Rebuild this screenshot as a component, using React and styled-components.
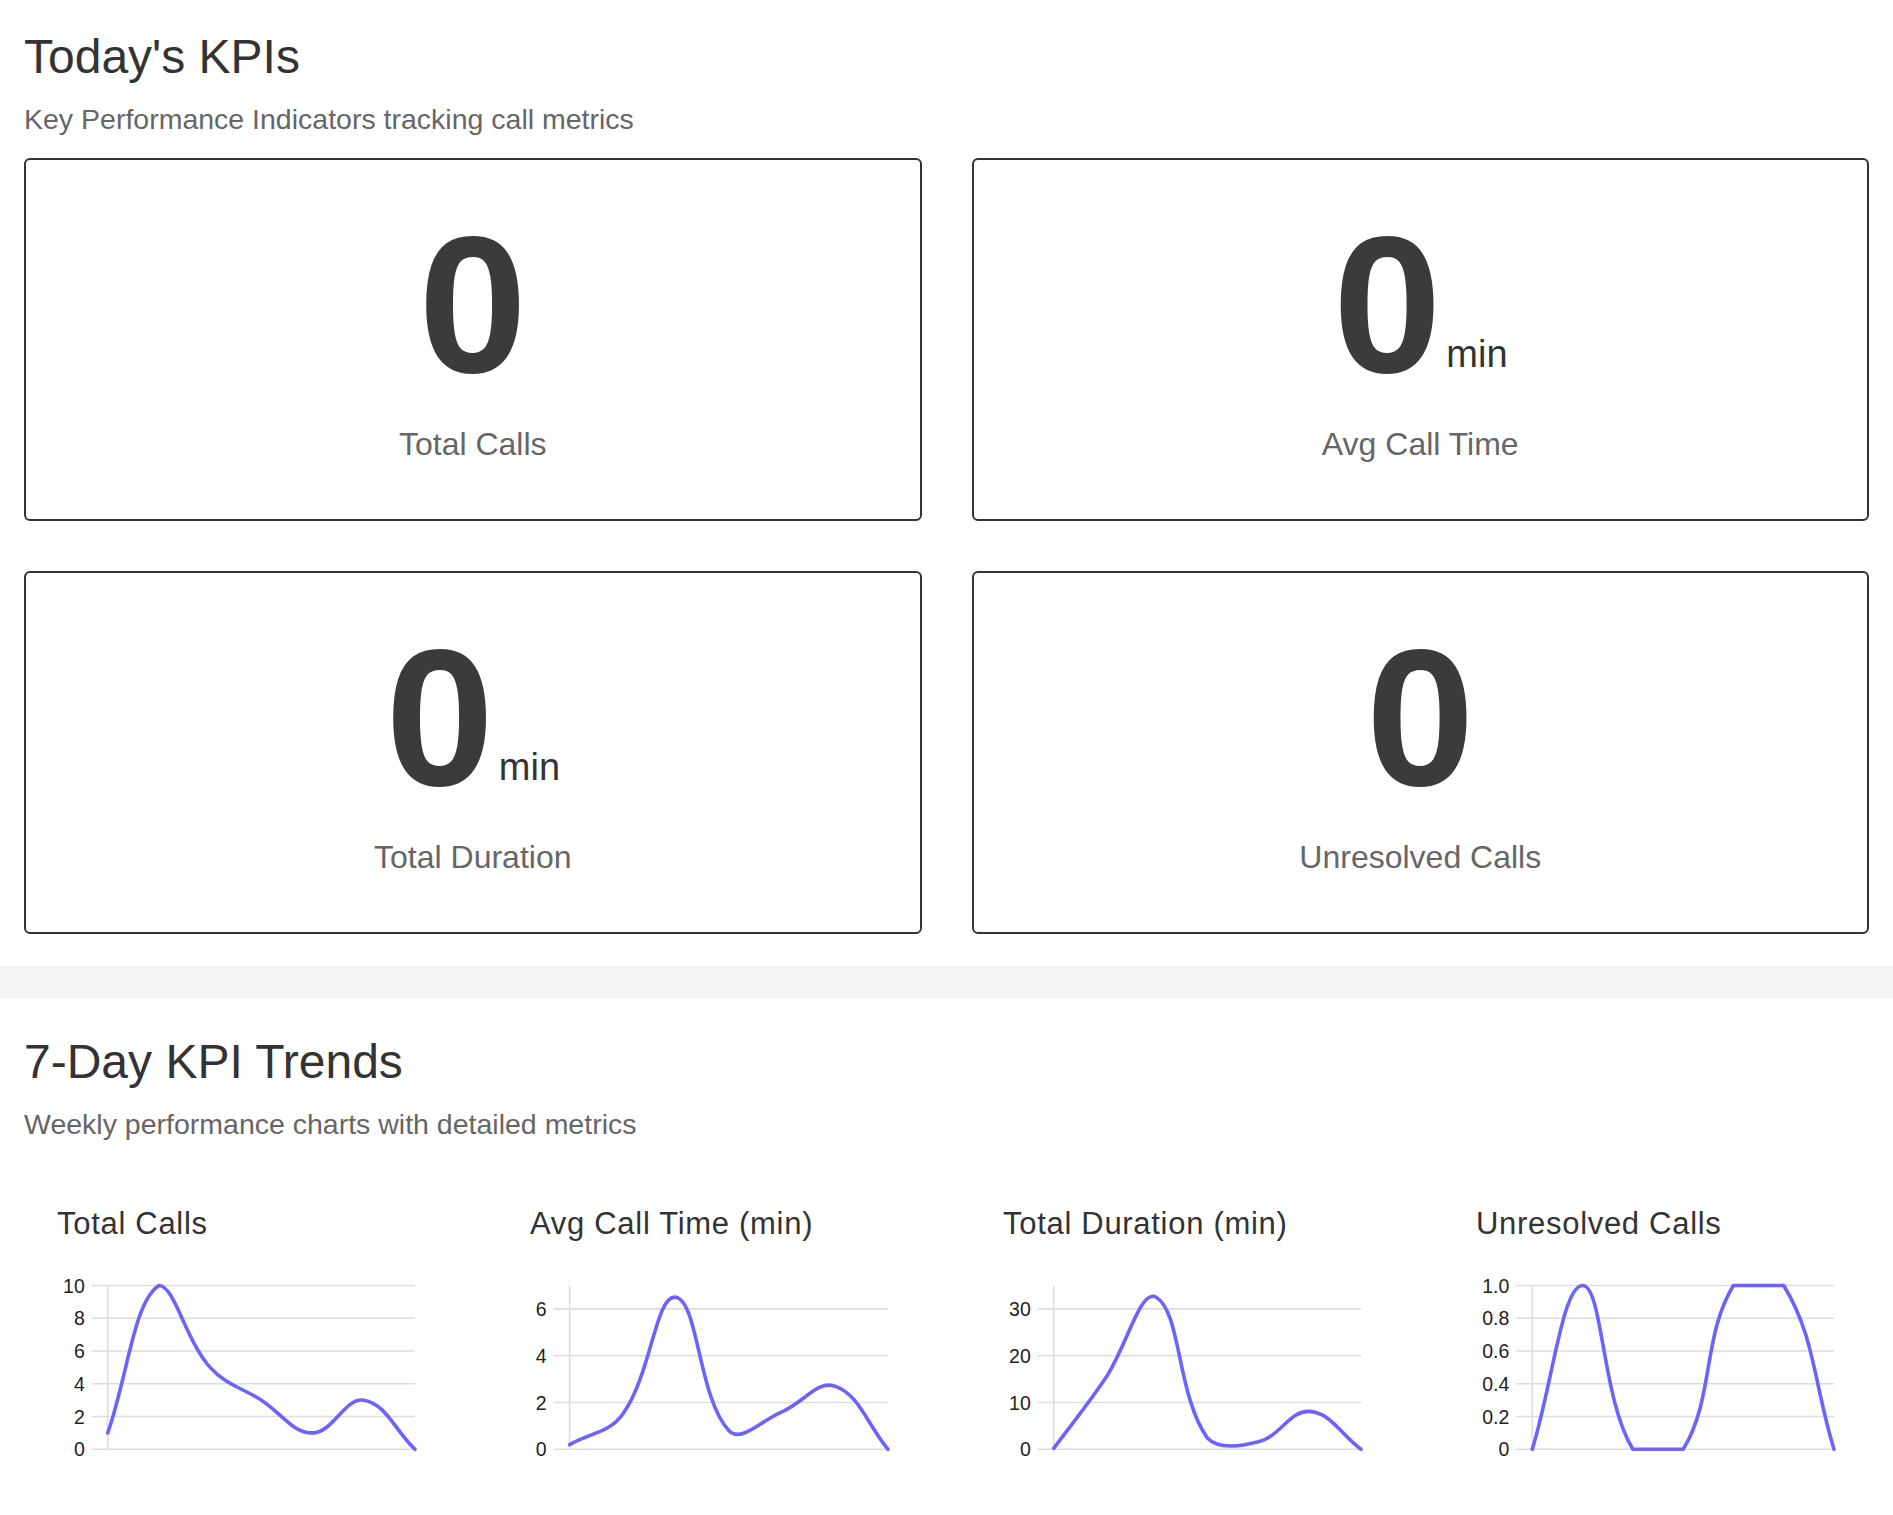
import React from 'react';
import styled, { createGlobalStyle } from 'styled-components';

const FONT = `"Liberation Sans", Arial, Helvetica, sans-serif`;

const GlobalStyle = createGlobalStyle`
  html, body { margin: 0; padding: 0; background: #ffffff; }
  body { font-family: ${FONT}; color: #333333; }
  * { box-sizing: border-box; }
`;

const Page = styled.div`
  width: 100%;
`;

const Section = styled.section`
  padding: ${(p) => p.$top}px 24px ${(p) => p.$bottom}px;
`;

const Heading = styled.h1`
  margin: 0;
  font-size: 48px;
  line-height: 55px;
  font-weight: 400;
  color: #333333;
`;

const Subheading = styled.p`
  margin: 19px 0 0;
  font-size: 28.5px;
  line-height: 32px;
  color: #666666;
`;

const KpiGrid = styled.div`
  margin-top: 23px;
  display: grid;
  grid-template-columns: 1fr 1fr;
  column-gap: 50px;
  row-gap: 50px;
`;

const KpiCard = styled.div`
  border: 2px solid #333333;
  border-radius: 6px;
  padding: 34px 0 56px;
  display: flex;
  flex-direction: column;
  align-items: center;
  gap: 12px;
`;

const ValueLine = styled.div`
  height: 220px;
  font-size: 195px;
  line-height: 220px;
  white-space: nowrap;
`;

const Value = styled.span`
  font-weight: 700;
  color: #3a3c3c;
`;

const Unit = styled.span`
  margin-left: 5px;
  font-size: 38px;
  line-height: 1;
  color: #333333;
  vertical-align: 5px;
`;

const KpiLabel = styled.div`
  font-size: 32px;
  line-height: 37px;
  color: #666666;
`;

const Band = styled.div`
  height: 32px;
  background: #f5f5f5;
`;

const ChartsRow = styled.div`
  margin-top: 33px;
  display: grid;
  grid-template-columns: repeat(4, 1fr);
  column-gap: 47px;
`;

const ChartCard = styled.div`
  padding: 33px 35px 0 33px;
`;

const ChartTitle = styled.h3`
  margin: 0;
  font-size: 31px;
  line-height: 35px;
  letter-spacing: 0.7px;
  font-weight: 400;
  color: #333333;
`;

const ChartSvg = styled.svg`
  display: block;
  width: 358px;
  height: 240px;
  overflow: visible;
`;

const kpis = [
  { value: '0', label: 'Total Calls' },
  { value: '0', unit: 'min', label: 'Avg Call Time' },
  { value: '0', unit: 'min', label: 'Total Duration' },
  { value: '0', label: 'Unresolved Calls' },
];

const charts = [
  { title: 'Total Calls', data: [1, 10, 5, 3, 1, 3, 0], max: 10, step: 2, fixed: 0 },
  { title: 'Avg Call Time (min)', data: [0.2, 1.5, 6.5, 0.8, 1.6, 2.7, 0], max: 7, step: 2, fixed: 0 },
  { title: 'Total Duration (min)', data: [0.2, 15, 32.5, 2.4, 1.6, 8.1, 0], max: 35, step: 10, fixed: 0 },
  { title: 'Unresolved Calls', data: [0, 1, 0, 0, 1, 1, 0], max: 1, step: 0.2, fixed: 1 },
];

function textWidth(s, size) {
  let w = 0;
  for (const ch of s) w += ch === '.' ? 0.278 : 0.556;
  return w * size;
}

function buildPath(pts, area) {
  const clampX = (v) => Math.min(Math.max(v, area.left), area.right);
  const clampY = (v) => Math.min(Math.max(v, area.top), area.bottom);
  const n = pts.length;
  const cps = pts.map((p, i) => {
    const prev = i > 0 ? pts[i - 1] : p;
    const next = i < n - 1 ? pts[i + 1] : p;
    const d01 = Math.hypot(p.x - prev.x, p.y - prev.y);
    const d12 = Math.hypot(next.x - p.x, next.y - p.y);
    let s01 = d01 / (d01 + d12);
    let s12 = d12 / (d01 + d12);
    if (isNaN(s01)) s01 = 0;
    if (isNaN(s12)) s12 = 0;
    const fa = 0.4 * s01;
    const fb = 0.4 * s12;
    return {
      px: clampX(p.x - fa * (next.x - prev.x)),
      py: clampY(p.y - fa * (next.y - prev.y)),
      nx: clampX(p.x + fb * (next.x - prev.x)),
      ny: clampY(p.y + fb * (next.y - prev.y)),
    };
  });
  let d = `M${pts[0].x.toFixed(2)},${pts[0].y.toFixed(2)}`;
  for (let i = 1; i < n; i++) {
    const a = cps[i - 1];
    const b = cps[i];
    d += ` C${a.nx.toFixed(2)},${a.ny.toFixed(2)} ${b.px.toFixed(2)},${b.py.toFixed(2)} ${pts[i].x.toFixed(2)},${pts[i].y.toFixed(2)}`;
  }
  return d;
}

function LineChart({ data, max, step, fixed }) {
  const top = 44.5;
  const bottom = 208.3;
  const right = 358;
  const ticks = [];
  for (let i = 0; i * step <= max + 1e-9; i++) ticks.push(i * step);
  const fmt = (v) => (v === 0 ? '0' : v.toFixed(fixed));
  const maxW = Math.max(...ticks.map((t) => textWidth(fmt(t), 20)));
  const labelRight = 5.5 + maxW;
  const tickStart = labelRight + 7;
  const axisX = tickStart + 16;
  const yOf = (v) => bottom - (v / max) * (bottom - top);
  const pts = data.map((v, i) => ({
    x: axisX + (i * (right - axisX)) / (data.length - 1),
    y: yOf(v),
  }));
  const d = buildPath(pts, { left: axisX, right, top, bottom });
  return (
    <ChartSvg viewBox="0 0 358 240">
      {ticks.map((t) => (
        <g key={t}>
          <line x1={tickStart} x2={right} y1={yOf(t)} y2={yOf(t)} stroke="#dddddd" strokeWidth="1.6" />
          <text
            x={labelRight}
            y={yOf(t) + 7}
            textAnchor="end"
            fontSize="19.5"
            fill="#222222"
            fontFamily={FONT}
          >
            {fmt(t)}
          </text>
        </g>
      ))}
      <line x1={axisX} x2={axisX} y1={top} y2={bottom} stroke="#dddddd" strokeWidth="1.6" />
      <path d={d} fill="none" stroke="#6c63ff" strokeWidth="3.6" strokeLinejoin="round" strokeLinecap="round" />
    </ChartSvg>
  );
}

export default function App() {
  return (
    <Page>
      <GlobalStyle />
      <Section $top={29} $bottom={32}>
        <Heading>Today's KPIs</Heading>
        <Subheading>Key Performance Indicators tracking call metrics</Subheading>
        <KpiGrid>
          {kpis.map((k) => (
            <KpiCard key={k.label}>
              <ValueLine>
                <Value>{k.value}</Value>
                {k.unit && <Unit>{k.unit}</Unit>}
              </ValueLine>
              <KpiLabel>{k.label}</KpiLabel>
            </KpiCard>
          ))}
        </KpiGrid>
      </Section>
      <Band />
      <Section $top={36} $bottom={35}>
        <Heading>7-Day KPI Trends</Heading>
        <Subheading>Weekly performance charts with detailed metrics</Subheading>
        <ChartsRow>
          {charts.map((c) => (
            <ChartCard key={c.title}>
              <ChartTitle>{c.title}</ChartTitle>
              <LineChart data={c.data} max={c.max} step={c.step} fixed={c.fixed} />
            </ChartCard>
          ))}
        </ChartsRow>
      </Section>
    </Page>
  );
}
